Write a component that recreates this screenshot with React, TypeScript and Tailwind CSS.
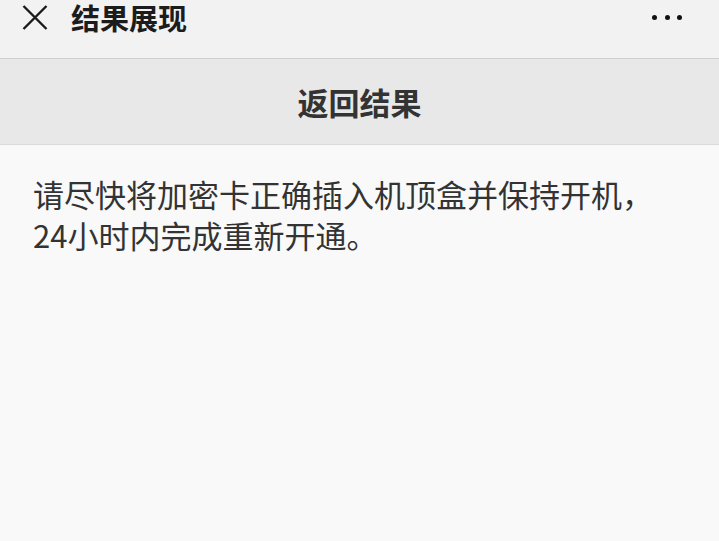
import React from "react";

export default function App() {
  const font = { fontFamily: '"Noto Sans CJK SC", "Noto Sans", sans-serif' };
  return (
    <div className="w-[719px] h-[541px] overflow-hidden bg-[#f9f9f9] flex flex-col" style={font}>
      <div className="h-[59px] shrink-0 bg-[#f2f2f2] border-b border-[#cfcfcf]">
        <div className="h-[34px] flex items-center pl-[22px] pr-[37px]">
          <svg width="26" height="26" viewBox="0 0 26 26" className="shrink-0">
            <path d="M1.5 2 L24.5 25 M24.5 2 L1.5 25" stroke="#1a1a1a" strokeWidth="2.4" strokeLinecap="butt" />
          </svg>
          <div className="ml-[23px] text-[29px] font-bold text-[#1c1c1c] leading-none">结果展现</div>
          <div className="ml-auto flex items-center gap-[7.5px]">
            <span className="w-[5px] h-[5px] rounded-full bg-[#111]" />
            <span className="w-[5px] h-[5px] rounded-full bg-[#111]" />
            <span className="w-[5px] h-[5px] rounded-full bg-[#111]" />
          </div>
        </div>
      </div>
      <div className="h-[86px] shrink-0 bg-[#e8e8e8] border-b border-[#dadada] flex items-center justify-center">
        <span className="text-[31px] font-bold text-[#333] leading-none">返回结果</span>
      </div>
      <div className="px-[33px] pt-[28px] text-[31px] leading-[41px] text-[#333]">
        请尽快将加密卡正确插入机顶盒并保持开机，
        <br />
        24小时内完成重新开通。
      </div>
    </div>
  );
}
